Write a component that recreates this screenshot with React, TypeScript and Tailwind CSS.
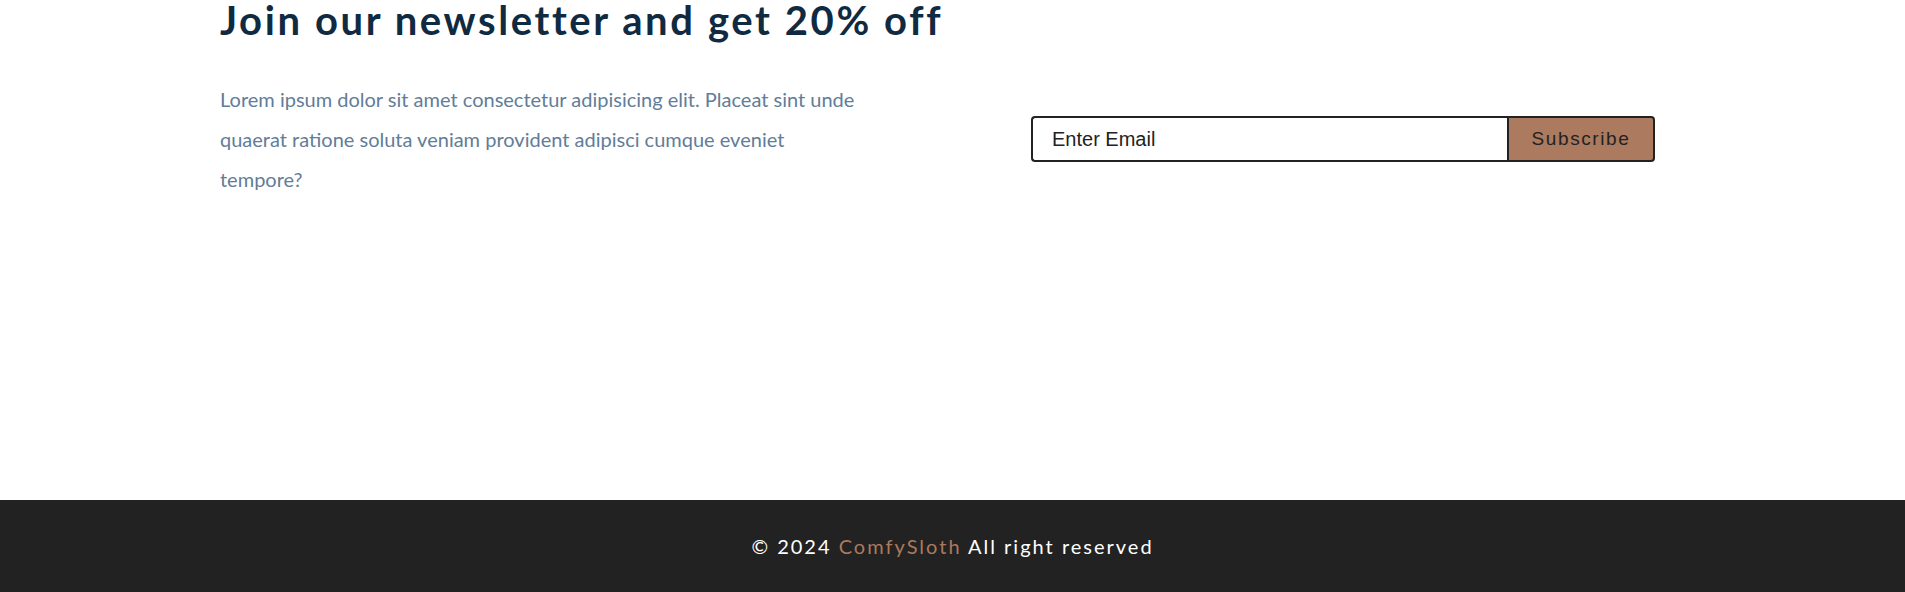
import React from 'react';

const App = () => {
  return (
    <div className="w-full h-[592px] bg-white flex flex-col font-['Lato',sans-serif] overflow-hidden">
      <section className="flex-1 pl-[220px] pr-[250px]">
        <h3 className="text-[40px] leading-[40px] font-bold tracking-[2.6px] text-[#102a42]">
          Join our newsletter and get 20% off
        </h3>
        <div className="flex items-center justify-between mt-[39px]">
          <p className="w-[652px] text-[20px] leading-[40px] text-[#617d98]">
            Lorem ipsum dolor sit amet consectetur adipisicing elit. Placeat sint unde quaerat ratione
            soluta veniam provident adipisci cumque eveniet tempore?
          </p>
          <form className="flex w-[624px] h-[46px] font-['Liberation_Sans',sans-serif]">
            <input
              type="email"
              placeholder="Enter Email"
              className="flex-1 border-2 border-r-0 border-[#222] rounded-l-[4px] px-[19px] text-[20px] text-[#222] placeholder:text-[#222] outline-none"
            />
            <button
              type="button"
              className="w-[148px] border-2 border-[#222] rounded-r-[4px] bg-[#ab7a5f] text-[19px] tracking-[1.6px] text-[#222]"
            >
              Subscribe
            </button>
          </form>
        </div>
      </section>
      <footer className="h-[92px] bg-[#222] flex items-center justify-center">
        <h5 className="text-[20px] tracking-[2px] text-white">
          © 2024 <span className="text-[#ab7a5f]">ComfySloth</span> All right reserved
        </h5>
      </footer>
    </div>
  );
};

export default App;
